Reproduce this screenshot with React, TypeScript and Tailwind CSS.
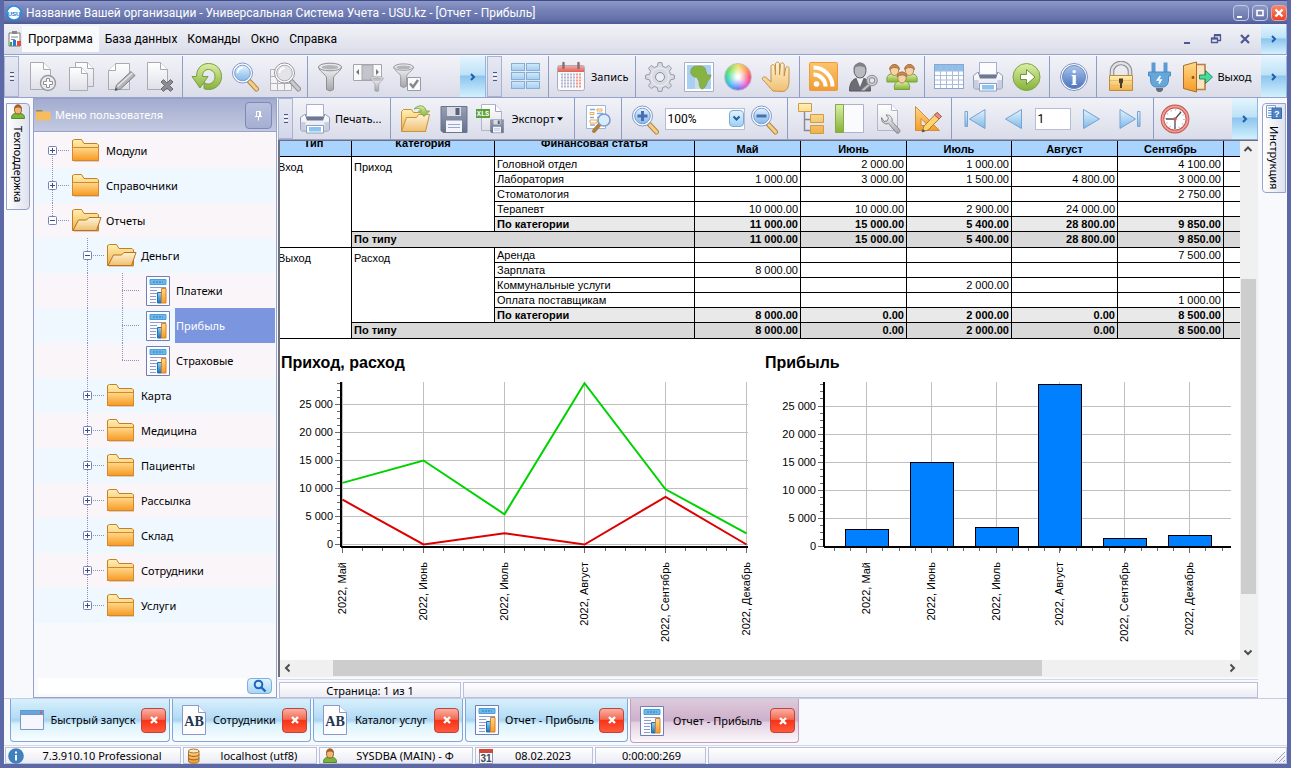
import type { ReactNode } from "react";

/* ---------- shared gradients ---------- */

const gradients: [string, string, string][] = [
  ["gDoc", "#ffffff", "#dfe0e8"],
  ["gSteel", "#f4f4f6", "#a3a4a8"],
  ["gGold", "#fff0b4", "#eeb04a"],
  ["gOrange", "#ffd98c", "#f79a22"],
  ["gSand", "#fff4d6", "#efbf70"],
  ["gGreen", "#dcefa6", "#84b236"],
  ["gBlue", "#e3f3fe", "#7fb8e8"],
  ["gTile", "#d3e9fa", "#a3cdf0"],
  ["gDeep", "#a9c4ee", "#4a74bd"],
  ["gSlate", "#98a0b5", "#66708a"],
  ["gRss", "#fbc56c", "#f29a33"],
  ["gRed", "#f4a79d", "#dc5f54"],
  ["gCyan", "#8fd4f8", "#1773bd"],
];

function Gradients() {
  return (
    <svg className="absolute size-0" aria-hidden="true">
      <defs>
        {gradients.map(([id, from, to]) => (
          <linearGradient key={id} id={id} x1="0" y1="0" x2="0" y2="1">
            <stop offset="0" stopColor={from} />
            <stop offset="1" stopColor={to} />
          </linearGradient>
        ))}
      </defs>
    </svg>
  );
}

function Ico({ children }: { children: ReactNode }) {
  return (
    <svg viewBox="0 0 32 32" className="size-8 shrink-0" fill="none" aria-hidden="true">
      {children}
    </svg>
  );
}

/* ---------- toolbar icons ---------- */

const Sheet = ({ stroke = "#a9aab2" }: { stroke?: string }) => (
  <g stroke={stroke}>
    <path d="M3.5 1.5h13l7 7v20h-20z" fill="url(#gDoc)" />
    <path d="M16.5 1.5v7h7" fill="#fff" />
  </g>
);

const DocAdd = () => (
  <Ico>
    <Sheet />
    <circle cx="21" cy="22" r="7.5" fill="#ececf0" stroke="#98999f" strokeWidth="1.4" />
    <path d="M19.5 17.5h3v3h3v3h-3v3h-3v-3h-3v-3h3z" fill="#fff" stroke="#8f9096" />
  </Ico>
);
const DocCopy = () => (
  <Ico>
    <g stroke="#a9aab2">
      <path d="M9.500 1.500h12l6 6v18h-18z" fill="url(#gDoc)" />
      <path d="M21.500 1.500v6h6" fill="#fff" />
      <path d="M3.500 6.500h12l6 6v17h-18z" fill="url(#gDoc)" />
      <path d="M15.500 6.500v6h6" fill="#fff" />
    </g>
  </Ico>
);
const DocEdit = () => (
  <Ico>
    <g stroke="#a9aab2">
      <path d="M24.500 2.500h-14l-7 7v19h21z" fill="url(#gDoc)" />
      <path d="M10.500 2.500v7h-7" fill="#fff" />
    </g>
    <path d="M10 29.500l1.500-5.500L26 10.500l4 4L15.500 28z" fill="#b4b5ba" stroke="#7f8086" strokeLinejoin="round" />
    <path d="M12.500 25.500L27.500 12" stroke="#e8e8ec" strokeWidth="1.300" />
    <path d="M10 29.500l1-3 2 2z" fill="#555" />
  </Ico>
);
const DocDelete = () => (
  <Ico>
    <Sheet />
    <path d="M17 21l2.500-2.500 3.500 3.500 3.500-3.500L29 21l-3.500 3.500L29 28l-2.500 2.500L23 27l-3.500 3.500L17 28l3.500-3.500z" fill="#8c8d92" stroke="#6b6c72" />
  </Ico>
);
const Refresh = () => (
  <Ico>
    <path
      d="M5.500 15.500C5.500 7.500 10.500 2.500 17.500 2.500c7.500 0 13 5.500 13 13S25 28.500 17.500 28.500c-1.500 0-3-.2-4.500-.8v-6.200c1.200 1 2.700 1.500 4.200 1.500 3.800 0 6.800-3.200 6.800-7.500S21 8.500 17.300 8.500c-3.300 0-5.800 2.500-5.800 7h5.500L9 27 1 15.500z"
      fill="url(#gGreen)"
      stroke="#7b9c41"
      strokeLinejoin="round"
    />
  </Ico>
);
const Magnifier = ({ sign, gray }: { sign?: "+" | "-"; gray?: boolean }) => (
  <g>
    <path d="M19.500 20.500l7 7.500" stroke={gray ? "#8e8f94" : "#a98449"} strokeWidth="5" strokeLinecap="round" />
    <path d="M20 21l6.500 7" stroke={gray ? "#c9cacd" : "#f8cd80"} strokeWidth="3.200" strokeLinecap="round" />
    <circle cx="12.500" cy="12" r="10" fill="#fff" stroke={gray ? "#97989d" : "#7f9ad0"} />
    <circle cx="12.500" cy="12" r="7.800" fill={gray ? "#e4e4e8" : "url(#gBlue)"} stroke={gray ? "#a9aaaf" : "#7f9ad0"} />
    {sign && <path d="M7.500 12h10" stroke="#4a6db3" strokeWidth="3" />}
    {sign === "+" && <path d="M12.500 7v10" stroke="#4a6db3" strokeWidth="3" />}
    {!sign && <path d="M7.500 12a5 5 0 0 1 5-5" stroke="#fff" strokeWidth="1.800" />}
  </g>
);
const Search = () => (
  <Ico>
    <Magnifier />
  </Ico>
);
const GridSearch = () => (
  <Ico>
    <path d="M1.500 8.500h21v21h-21zM1.500 15.500h21M1.500 22.500h21M8.500 8.500v21M15.500 8.500v21" fill="#f3f3f6" stroke="#b2b3b9" />
    <g transform="translate(3 0)">
      <Magnifier gray />
    </g>
  </Ico>
);
const FunnelShape = () => (
  <g stroke="#8f9096">
    <path d="M4.500 6c0 4 8 7.500 8 11v11.500l3.500 1.500 3.500-1.500V17c0-3.500 8-7 8-11z" fill="url(#gSteel)" />
    <ellipse cx="16" cy="6" rx="11.500" ry="3.800" fill="#e9e9ec" />
    <ellipse cx="16" cy="6.300" rx="8.500" ry="2.200" fill="#b4b5ba" stroke="none" />
  </g>
);
const Funnel = () => (
  <Ico>
    <FunnelShape />
  </Ico>
);
const FunnelPanel = () => (
  <Ico>
    <path d="M.5 3.500h28v16H.5z" fill="#fafafa" stroke="#a5a6ac" />
    <path d="M9 4h11v15H9z" fill="#c4c5ca" stroke="#a5a6ac" />
    <path d="M6 8v6l-3-3zM23 8v6l3-3z" fill="#77787e" />
    <g transform="translate(15 14) scale(.55)">
      <FunnelShape />
    </g>
  </Ico>
);
const FunnelCheck = () => (
  <Ico>
    <g transform="translate(-2 1) scale(.85)">
      <FunnelShape />
    </g>
    <path d="M15.500 16.500h13v13h-13z" fill="#fbfbfd" stroke="#9a9ba2" />
    <path d="M18 22.500l3 3.500 5-7" stroke="#85868c" strokeWidth="2.400" />
  </Ico>
);
const Tiles = () => (
  <Ico>
    {[2.5, 11.5, 20.5].map((y) =>
      [1.5, 16.5].map((x) => (
        <rect key={`${x}-${y}`} x={x} y={y} width="13" height="7" fill="url(#gTile)" stroke="#86afd8" />
      )),
    )}
  </Ico>
);
const Calendar = () => (
  <Ico>
    <rect x="2.500" y="4.500" width="27" height="25" rx="2" fill="#fafafd" stroke="#a9abc0" />
    <path d="M3 5h26v6H3z" fill="url(#gRed)" />
    <path d="M8.500 2v5M23.500 2v5" stroke="#8d6b73" strokeWidth="2.400" strokeLinecap="round" />
    {[13, 16, 19, 22, 25].map((y) => (
      <g key={y}>
        <path d={`M6 ${y + 0.5}h14`} stroke="#b2b6cf" strokeWidth="2" strokeDasharray="2 1" />
        <path d={`M21 ${y + 0.5}h5`} stroke="#f19a8f" strokeWidth="2" strokeDasharray="2 1" />
      </g>
    ))}
  </Ico>
);
const gearPath = (() => {
  const points: string[] = [];
  for (let i = 0; i < 8; i++) {
    const a = (i * Math.PI) / 4;
    for (const [d, r] of [[-0.25, 11], [-0.13, 14.5], [0.13, 14.5], [0.25, 11]]) {
      points.push(`${(16 + Math.sin(a + d) * r).toFixed(1)} ${(16 - Math.cos(a + d) * r).toFixed(1)}`);
    }
  }
  return `M${points.join("L")}z`;
})();
const Gear = () => (
  <Ico>
    <path d={gearPath} fill="#d9dbe4" stroke="#979aa8" strokeLinejoin="round" />
    <circle cx="16" cy="16" r="4.500" fill="#eceef5" stroke="#8b8d99" />
    <circle cx="16" cy="16" r="9" stroke="#eff0f5" />
  </Ico>
);
const MapIcon = () => (
  <Ico>
    <path d="M1.500 1.500h29v29h-29z" fill="#fff" stroke="#a9aecb" />
    <path d="M4 4h24v24H4z" fill="#a9d0f2" />
    <path d="M12 4h8v24h-8z" fill="#cbdde6" />
    <path d="M8 9c1-3 3-4 6-4h5l3 2 2 7h4c0 4-4 5-4 8-1 3-3 6-5 6s-3-5-3-8c-2-2-1-4-4-4-3-1-5-3-4-7z" fill="#86b443" stroke="#8aa458" />
  </Ico>
);
const ColorWheel = () => (
  <span className="size-7 rounded-full border border-[#c5b9cc] bg-[radial-gradient(circle,white_8%,transparent_62%),conic-gradient(from_0deg,#f0e060,#ff9c5c,#fb5470,#e560d8,#6d7cf2,#42b6f0,#35d8a0,#7be060,#f0e060)]" />
);
const Hand = () => (
  <Ico>
    <path
      d="M12 30C9 27 5 22 1.500 18.500c-1-2 1.500-3.500 3.500-2l5 4.500V5.500c0-2.500 3.500-2.500 3.800 0L14.500 14V3c.2-2.500 3.800-2.500 4 0v11l1-10.500c.3-2.300 3.700-2 3.700.3V15l1.500-8c.5-2 3.500-1.700 3.300.5V21c0 5-2.500 9-5.500 9.500z"
      fill="url(#gSand)"
      stroke="#c39049"
    />
  </Ico>
);
const Rss = () => (
  <Ico>
    <rect x="1.500" y="1.500" width="28" height="28" rx="1" fill="url(#gRss)" stroke="#ec9a3a" />
    <circle cx="8.500" cy="23" r="2.800" fill="#fff" />
    <path d="M5.500 13.500a12 12 0 0 1 12 12M5.500 6.500a19 19 0 0 1 19 19" stroke="#fff" strokeWidth="4" />
  </Ico>
);
const PersonKey = () => (
  <Ico>
    <path d="M2.500 30c0-8 3-12 8-13h5c5 1 8 5 8 13z" fill="#6c6d74" stroke="#55565c" />
    <path d="M9.500 17l3.500 9 3.500-9z" fill="#f1f1f4" />
    <ellipse cx="13" cy="9.500" rx="6" ry="7.500" fill="#b9babf" stroke="#5d5e64" />
    <path d="M6.500 8c0-8 13-8.500 13 0-3-3-9-4-13 0z" fill="#808188" />
    <path d="M22 22l-8 7 3 1 8-7z" fill="#c0c1c6" stroke="#808187" />
    <circle cx="25" cy="19.500" r="4" stroke="#8e8f95" strokeWidth="3.600" />
    <circle cx="25" cy="19.500" r="4" stroke="#cfd0d4" strokeWidth="1.600" />
  </Ico>
);
const Head = ({ x, y }: { x: number; y: number }) => (
  <g transform={`translate(${x} ${y})`}>
    <path d="M-7.500 15.500C-8.500 8.500-5 7.500-2.500 7.500h5C5 7.500 8.500 8.500 7.500 15.500z" fill="url(#gGreen)" stroke="#7a9f42" />
    <ellipse cy="3.500" rx="4.200" ry="5.500" fill="#f5d3a8" stroke="#b9854e" />
    <path d="M-4.800 3c-.5-6.500 10-6.500 9.600 0C3 .5-2 0-4.800 3z" fill="#c98a55" stroke="#a9713d" />
  </g>
);
const Users = () => (
  <Ico>
    <Head x={8.500} y={5.500} />
    <Head x={23.500} y={5.500} />
    <Head x={16} y={13} />
  </Ico>
);
const TableIcon = () => (
  <Ico>
    <rect x="1.500" y="3.500" width="29" height="24" fill="#fff" stroke="#8ba6cf" />
    <path d="M2 4h28v6H2z" fill="#8cc0ec" />
    <path d="M2 10h28M2 14.500h28M2 19h28M2 23.500h28M7.500 4v23M13.500 4v23M19.500 4v23M25.500 4v23" stroke="#a9bcdc" />
  </Ico>
);
const Printer = () => (
  <Ico>
    <path d="M5.500 11.500h21l4 3v11.500c0 1-1 2-2 2h-25c-1 0-2-1-2-2v-11.500z" fill="url(#gDoc)" stroke="#8d97b7" />
    <path d="M6 12l2 5.500h16l2-5.500z" fill="#6f7891" />
    <path d="M7.500 1.500h17v12h-17z" fill="#fcfcff" stroke="#a6add0" />
    <path d="M1.500 19h5v9h-5zM25.500 19h5v9h-5z" fill="#b9c2d8" opacity=".7" />
    <path d="M7.500 22.500h17v7.500h-17z" fill="#fff" stroke="#8d9cc4" />
    <path d="M10 24h12v4.500H10z" fill="#8cc4f0" />
  </Ico>
);
const GoArrow = () => (
  <Ico>
    <circle cx="15.500" cy="16" r="13.500" fill="url(#gGreen)" stroke="#7ea24a" />
    <path d="M9.500 13.500h6v-5l8.500 7.500-8.500 7.500v-5h-6z" fill="#fff" stroke="#6d9439" strokeLinejoin="round" />
  </Ico>
);
const Info = () => (
  <Ico>
    <circle cx="16" cy="16" r="13.500" fill="#fff" stroke="#7e90bd" />
    <circle cx="16" cy="16" r="11.500" fill="url(#gDeep)" stroke="#6f8bc4" />
    <text x="16" y="23.500" textAnchor="middle" fontFamily="Liberation Serif, serif" fontWeight="700" fontSize="22" fill="#fff">
      i
    </text>
  </Ico>
);
const Lock = () => (
  <Ico>
    <path d="M7 15v-4.500a9 8.500 0 0 1 18 0V15" stroke="#8d8e93" strokeWidth="4.600" />
    <path d="M7 15v-4.500a9 8.500 0 0 1 18 0V15" stroke="#e2e2e5" strokeWidth="2.400" />
    <path d="M4.500 14.500h23v15h-23z" fill="url(#gGold)" stroke="#c08c38" />
    <path d="M5 19.500h22M5 24.500h22" stroke="#e9bd6c" />
    <path d="M14 17.500h4v4l-1 1v4.500h-2v-4.500l-1-1z" fill="#4c3d2a" />
  </Ico>
);
const Plug = () => (
  <Ico>
    <path d="M9.500 1.500v10M21.500 1.500v10" stroke="#5c9bd1" strokeWidth="4" />
    <path d="M4.500 11h22v4h-2v4c0 4-2.500 7-5.500 7h-7c-3 0-5.500-3-5.500-7v-4h-2z" fill="#65a6db" stroke="#4b8ac2" />
    <path d="M16.500 15l-3 4h3.500l-2 3.500" stroke="#fff" strokeWidth="1.600" />
    <path d="M12 27h7v2l-2 2h-3l-2-2z" fill="#6a6f7b" />
  </Ico>
);
const Door = () => (
  <Ico>
    <path d="M12 3.500h12v25H12z" fill="#fbe3c2" stroke="#b98043" strokeWidth="1.600" />
    <path d="M2.500 4.500l13-3.500v30l-13-3.500z" fill="url(#gOrange)" stroke="#a96c2d" strokeLinejoin="round" />
    <circle cx="12" cy="16.500" r="1.400" fill="#8a5520" />
    <path d="M18.500 14h6v-4.500l7 6.500-7 6.500V18h-6z" fill="#46dd9b" stroke="#2c8f62" strokeLinejoin="round" />
  </Ico>
);
const OpenFolder = () => (
  <Ico>
    <path d="M2.500 28.500V8.500l2-2h8l2 3h12v19z" fill="url(#gGold)" stroke="#c9923f" />
    <path d="M2.500 28.500l5-14h10l2-3h11l-4 17z" fill="url(#gSand)" stroke="#c9923f" strokeLinejoin="round" />
    <path d="M15 6c5-5 11-4 12 2h3.500l-5.500 5.500L19.500 8h3c-1-3-4-3-7.500-2z" fill="url(#gGreen)" stroke="#83a850" />
  </Ico>
);
const FloppyShape = () => (
  <g>
    <path d="M3 3.500h26v26H5l-2-2z" fill="url(#gSlate)" stroke="#6b7590" />
    <path d="M9 4h14v9H9z" fill="#d9dce6" />
    <path d="M17.500 5h4v7h-4z" fill="#5a627a" />
    <path d="M8 17.500h16V29H8z" fill="#f4f5fa" />
    <path d="M10 21.500h12M10 24.500h12" stroke="#9aa6cf" />
  </g>
);
const Floppy = () => (
  <Ico>
    <FloppyShape />
  </Ico>
);
const XlsExport = () => (
  <Ico>
    <path d="M6.500 1.500h14l6 7v19h-20z" fill="url(#gDoc)" stroke="#b0b4cc" />
    <path d="M20.500 1.500v7h6" fill="#fff" stroke="#9ea4c4" />
    <path d="M1 6h14v9H1z" fill="#5da03b" />
    <text x="8" y="13" textAnchor="middle" fontFamily="Liberation Mono, monospace" fontWeight="700" fontSize="7" fill="#fff">
      XLS
    </text>
    <g transform="translate(14 15) scale(.5)">
      <FloppyShape />
    </g>
  </Ico>
);
const Preview = () => (
  <Ico>
    <path d="M4.500 2.500h19v23h-19z" fill="#fff" stroke="#9fb4d8" />
    <path d="M8 6.500h5M15 10.500h6M8 14.500h4M15 14.500h6M8 18.500h5M8 22h5" stroke="#7eaee0" strokeWidth="1.400" />
    <path d="M15 6h5v2h-5zM8 9.500h4v2H8zM8 17h7v3H8z" fill="#fff" stroke="#f0a84d" />
    <path d="M18 21l-6 7" stroke="#b07c3a" strokeWidth="4" strokeLinecap="round" />
    <circle cx="22" cy="17" r="6" fill="#d9ecfb" stroke="#7f9bcb" strokeWidth="1.600" />
  </Ico>
);
const ZoomIn = () => (
  <Ico>
    <g transform="translate(1 1)">
      <Magnifier sign="+" />
    </g>
  </Ico>
);
const ZoomOut = () => (
  <Ico>
    <g transform="translate(1 1)">
      <Magnifier sign="-" />
    </g>
  </Ico>
);
const Outline = () => (
  <Ico>
    <path d="M9.500 8v19.500H15M9.500 16.500H15" stroke="#868993" strokeWidth="1.400" />
    <path d="M3.500 .5h13v8h-13zM15.500 11.500h13v8h-13zM15.500 22.500h13v8h-13z" fill="url(#gGold)" stroke="#d19a44" />
  </Ico>
);
const SidePane = () => (
  <Ico>
    <path d="M1.500 1.500h28v28h-28z" fill="#fbfbfe" stroke="#a9b2cf" />
    <path d="M1.500 1.500h8v28h-8z" fill="url(#gGreen)" stroke="#86a94a" />
  </Ico>
);
const PageSetup = () => (
  <Ico>
    <path d="M4.500 1.500h14l6 6v20h-20z" fill="url(#gDoc)" stroke="#b0b4cc" />
    <path d="M18.500 1.500v6h6" fill="#fff" stroke="#b0b4cc" />
    <path
      d="M8.500 14.500c-.5 5 3.500 7.500 7 6l7.500 9c2 2 5-.5 3.500-3l-7.500-8c1-4-2.500-7-6-6.500l2.500 3-1.500 3-3 .5z"
      fill="url(#gSteel)"
      stroke="#85868d"
      strokeLinejoin="round"
    />
  </Ico>
);
const Drafting = () => (
  <Ico>
    <path d="M3.500 3.500v24h24zM9 15.500l7 7H9z" fill="url(#gOrange)" fillRule="evenodd" stroke="#cf8d3f" strokeLinejoin="round" />
    <path d="M10 29l2-6L25 9.500l4.500 4L16 27z" fill="#ffd46e" stroke="#a97b36" strokeLinejoin="round" />
    <path d="M25 9.500l4.500 4-2.500 2.500-4.500-4z" fill="#e88d8a" stroke="#a65b59" />
    <path d="M10 29l1-3 2 2z" fill="#444" />
  </Ico>
);
const NavIcon = ({ back, end }: { back?: boolean; end?: boolean }) => (
  <Ico>
    <g fill="url(#gBlue)" stroke="#74a3d4" strokeLinejoin="round" transform={back ? "translate(32 0) scale(-1 1)" : undefined}>
      <path d={end ? "M6 6.500v19l15.500-9.500z" : "M8.500 6.500v19l16-9.500z"} />
      {end && <path d="M23.500 8.500h2.500v15h-2.500z" />}
    </g>
  </Ico>
);
const Clock = () => (
  <Ico>
    <circle cx="16" cy="16" r="12.500" fill="#fff" stroke="#c3524d" strokeWidth="3.800" />
    <circle cx="16" cy="16" r="12.500" stroke="#ee9b94" strokeWidth="2" />
    <circle cx="16" cy="16" r="9" stroke="#aeb4c8" strokeWidth="1.500" strokeDasharray="1 3.700" />
    <path d="M16 26V16h-9M16 16l6-7" stroke="#4c4e5a" strokeWidth="1.300" />
    <circle cx="16" cy="16" r="1.800" fill="#d45a52" />
  </Ico>
);

/* ---------- small icons ---------- */

const ReportSheet = () => (
  <svg viewBox="0 0 26 32" className="h-8 w-[26px] shrink-0" fill="none" aria-hidden="true">
    <path d="M1.500 1.500h23v29h-23z" fill="#fcfcff" stroke="#6f7fb6" />
    <path d="M5 4.500h16v5H5z" fill="#6cb8ea" stroke="#4c9ed8" />
    <path d="M8 7h10" stroke="#2f7db8" strokeDasharray="2 1" />
    <path d="M5 12.500h16M5 15.500h7M5 18.500h7M5 21.500h6M5 24.500h6M5 27.500h6" stroke="#8e9bcf" />
    <path d="M12.500 17.500h4v10.500h-4z" fill="url(#gCyan)" stroke="#1f6fb4" />
    <path d="M16.500 13.500h4.500v14.500h-4.500z" fill="url(#gOrange)" stroke="#d8812a" />
  </svg>
);
const Folder = ({ open }: { open?: boolean }) => (
  <svg viewBox="0 0 32 26" className="h-[26px] w-8 shrink-0" fill="none" aria-hidden="true">
    <path d="M1.500 22.500v-20l2-1h7l2.500 4h13l1.500 1.500v15.500z" fill="url(#gGold)" stroke="#c77f1e" strokeLinejoin="round" />
    {open ? (
      <path d="M2 22.500l5.500-10.500h8l2.500-2.500h12l-4.500 13z" fill="url(#gSand)" stroke="#b9721a" strokeLinejoin="round" />
    ) : (
      <path d="M1.500 22.500V10.500l1-1h24.500l.5 1v12z" fill="url(#gOrange)" stroke="#d7872a" strokeLinejoin="round" />
    )}
    <path d="M3 23.500h25" stroke="#d9cfc6" />
  </svg>
);
const PersonSmall = () => (
  <svg viewBox="0 0 16 16" className="size-4 shrink-0" fill="none" aria-hidden="true">
    <path d="M1.500 14.500c0-4 2-5 4.500-5h4c2.500 0 4.500 1 4.500 5z" fill="#7db53c" stroke="#4f8a22" />
    <ellipse cx="8" cy="5.500" rx="3.500" ry="4.500" fill="#f0b878" stroke="#9a5a26" />
    <path d="M4.500 5c-.5-6 7.500-6 7 0-2-2-5-2-7 0z" fill="#a5602a" />
  </svg>
);
const HelpBook = () => (
  <svg viewBox="0 0 16 16" className="size-4 shrink-0" fill="none" aria-hidden="true">
    <path d="M.5 1.500h9v12h-9z" fill="#fff" stroke="#7f9fce" />
    <path d="M2 4h5M2 6.500h5M2 9h5M2 11.500h5" stroke="#5e8fcb" />
    <path d="M6 4h9.500v10.500H6z" fill="#4b83c3" stroke="#356cae" />
    <text x="10.800" y="12.500" textAnchor="middle" fontFamily="Liberation Sans, sans-serif" fontWeight="700" fontSize="9" fill="#fff">
      ?
    </text>
  </svg>
);
const WindowIcon = () => (
  <svg viewBox="0 0 26 22" className="h-[22px] w-[26px] shrink-0" fill="none" aria-hidden="true">
    <path d="M1.500 1.500h23v19h-23z" fill="#f6f7fc" stroke="#7f93c4" />
    <path d="M1.500 1.500h23v4h-23z" fill="#5fa9e0" stroke="#6f93c9" />
    <path d="M21 2.500h2v2h-2z" fill="#f0503c" />
  </svg>
);
const AbSheet = () => (
  <svg viewBox="0 0 26 32" className="h-8 w-[26px] shrink-0" fill="none" aria-hidden="true">
    <path d="M1.500 1.500h16l7 7v22h-23z" fill="#fdfdff" stroke="#8c98c9" />
    <path d="M17.500 1.500v7h7" fill="#fff" stroke="#8c98c9" />
    <text x="13" y="21.500" textAnchor="middle" fontFamily="Liberation Serif, serif" fontWeight="700" fontSize="14" fill="#22384e">
      AB
    </text>
  </svg>
);
const InfoSmall = () => (
  <svg viewBox="0 0 16 16" className="size-4 shrink-0" aria-hidden="true">
    <circle cx="8" cy="8" r="7.800" fill="#4080bc" />
    <path d="M7 3.500h2v2H7zM7 7h2v5.500H7z" fill="#fff" />
  </svg>
);
const Database = () => (
  <svg viewBox="0 0 16 16" className="size-4 shrink-0" fill="none" aria-hidden="true">
    <path d="M2.500 3v10c0 3 10.500 3 10.500 0V3z" fill="url(#gOrange)" stroke="#a8733a" />
    <ellipse cx="7.750" cy="3" rx="5.250" ry="2" fill="#ffe9bd" stroke="#a8733a" />
    <path d="M2.500 6.500c0 2.500 10.500 2.500 10.500 0M2.500 10c0 2.500 10.500 2.500 10.500 0" stroke="#8f5b28" />
  </svg>
);
const Day31 = () => (
  <svg viewBox="0 0 16 16" className="size-4 shrink-0" fill="none" aria-hidden="true">
    <path d="M1.500 1.500h13v14h-13z" fill="#fbfbfd" stroke="#9097ad" />
    <path d="M1 1h14v4H1z" fill="#d0473c" />
    <text x="8" y="13.500" textAnchor="middle" fontFamily="Liberation Sans, sans-serif" fontWeight="700" fontSize="10" fill="#3c4657">
      31
    </text>
  </svg>
);
const Chevron = () => (
  <svg viewBox="0 0 8 10" className="h-[10px] w-2" fill="none" aria-hidden="true">
    <path d="M2 2l3 3-3 3" stroke="#1c5fae" strokeWidth="2" />
  </svg>
);
const ScrollArrow = ({ d }: { d: string }) => (
  <svg viewBox="0 0 16 16" className="size-4" fill="none" aria-hidden="true">
    <path d={d} stroke="#4d4d4d" strokeWidth="2" />
  </svg>
);

/* ---------- toolbar parts ---------- */

const bar = "flex items-stretch bg-linear-to-b from-[#f2f3f8] to-[#dadce9]";

function Grip() {
  return (
    <span className="flex w-[15px] shrink-0 flex-col items-center justify-center gap-px border border-[#a9b2d3] bg-linear-to-b from-[#e6e8f2] to-[#d3d7e8]">
      <i className="h-px w-1 bg-[#4a5688]" />
      <i className="h-px w-1 bg-white" />
      <i className="h-px w-1 bg-[#4a5688]" />
      <i className="h-px w-1 bg-white" />
      <i className="h-px w-1 bg-[#4a5688]" />
    </span>
  );
}

function More() {
  return (
    <button
      aria-label="Ещё"
      className="flex w-[26px] shrink-0 items-center justify-center border-r border-[#8fb7df] bg-[linear-gradient(#e4f5fe,#bfe2f7_45%,#8fc6ee_50%,#d2f1fd)]"
    >
      <Chevron />
    </button>
  );
}

const Group = ({ children }: { children: ReactNode }) => (
  <div className="flex shrink-0 items-center border-r border-[#8f9cc6] pr-[3px] pl-1">{children}</div>
);

const Tool = ({ name, children }: { name: string; children: ReactNode }) => (
  <button aria-label={name} className="flex w-[39px] shrink-0 items-center justify-center">
    {children}
  </button>
);

/* ---------- tree ---------- */

type Node = { label: string; level: number; kind: "folder" | "open" | "report"; selected?: boolean; last?: boolean; first?: boolean };

const nodes: Node[] = [
  { label: "Модули", level: 0, kind: "folder", first: true },
  { label: "Справочники", level: 0, kind: "folder" },
  { label: "Отчеты", level: 0, kind: "open", last: true },
  { label: "Деньги", level: 1, kind: "open" },
  { label: "Платежи", level: 2, kind: "report" },
  { label: "Прибыль", level: 2, kind: "report", selected: true },
  { label: "Страховые", level: 2, kind: "report", last: true },
  { label: "Карта", level: 1, kind: "folder" },
  { label: "Медицина", level: 1, kind: "folder" },
  { label: "Пациенты", level: 1, kind: "folder" },
  { label: "Рассылка", level: 1, kind: "folder" },
  { label: "Склад", level: 1, kind: "folder" },
  { label: "Сотрудники", level: 1, kind: "folder" },
  { label: "Услуги", level: 1, kind: "folder", last: true },
];

function Branch({ node, depth }: { node: Node; depth: number }) {
  const own = depth === node.level;
  const through = depth === 1 && node.level === 2;
  return (
    <svg viewBox="0 0 35 35" className="size-[35px] shrink-0" fill="none" aria-hidden="true">
      {(own || through) && (
        <g stroke="#8a93ba" strokeDasharray="1 1">
          <path d={`M17.500 ${own && node.first ? 17 : 0}V${own && node.last ? 18 : 35}`} />
          {own && <path d={`M17 17.500H${node.level === 2 ? 35 : 34}`} />}
        </g>
      )}
      {own && node.kind !== "report" && (
        <g>
          <rect x="13.500" y="13.500" width="8" height="8" rx="1" fill="#fff" stroke="#7580b4" />
          <path d={node.kind === "folder" ? "M15 17.500h5M17.500 15v5" : "M15 17.500h5"} stroke="#3d4a8c" />
        </g>
      )}
    </svg>
  );
}

function TreeRow({ node }: { node: Node }) {
  const depths = Array.from({ length: node.level + 1 }, (_, i) => i);
  return (
    <li className="flex h-[35px] items-center odd:bg-[#faf5f8] even:bg-[#eff7ff]">
      {depths.map((d) => (
        <Branch key={d} node={node} depth={d} />
      ))}
      <span className={node.kind === "report" ? "flex w-[35px] justify-center" : "flex w-[35px] pl-px"}>
        {node.kind === "report" ? <ReportSheet /> : <Folder open={node.kind === "open"} />}
      </span>
      <button
        className={
          node.selected
            ? "flex h-full flex-1 items-center bg-[#7b96de] pl-px text-white"
            : "flex h-full flex-1 items-center pl-px text-black"
        }
      >
        {node.label}
      </button>
    </li>
  );
}

/* ---------- report ---------- */

type Line = { name: string; values: string[] };
type Section = { type: string; category: string; lines: Line[]; total: string[] };

const months = ["Май", "Июнь", "Июль", "Август", "Сентябрь", ""];

const sections: Section[] = [
  {
    type: "Вход",
    category: "Приход",
    lines: [
      { name: "Головной отдел", values: ["", "2 000.00", "1 000.00", "", "4 100.00", ""] },
      { name: "Лаборатория", values: ["1 000.00", "3 000.00", "1 500.00", "4 800.00", "3 000.00", ""] },
      { name: "Стоматология", values: ["", "", "", "", "2 750.00", ""] },
      { name: "Терапевт", values: ["10 000.00", "10 000.00", "2 900.00", "24 000.00", "", ""] },
    ],
    total: ["11 000.00", "15 000.00", "5 400.00", "28 800.00", "9 850.00", ""],
  },
  {
    type: "Выход",
    category: "Расход",
    lines: [
      { name: "Аренда", values: ["", "", "", "", "7 500.00", ""] },
      { name: "Зарплата", values: ["8 000.00", "", "", "", "", ""] },
      { name: "Коммунальные услуги", values: ["", "", "2 000.00", "", "", ""] },
      { name: "Оплата поставщикам", values: ["", "", "", "", "1 000.00", ""] },
    ],
    total: ["8 000.00", "0.00", "2 000.00", "0.00", "8 500.00", ""],
  },
];

const cell = "border border-black px-0.5 py-0";
const num = "border border-black px-0.5 py-0 text-right";

function SectionRows({ section }: { section: Section }) {
  return (
    <tbody>
      {section.lines.map((line, i) => (
        <tr key={line.name} className="h-[15px]">
          {i === 0 && (
            <>
              <td rowSpan={6} className={`${cell} pt-[3px] align-top`}>{section.type}</td>
              <td rowSpan={5} className={`${cell} pt-[3px] align-top`}>{section.category}</td>
            </>
          )}
          <td className={cell}>{line.name}</td>
          {line.values.map((v, k) => (
            <td key={k} className={num}>{v}</td>
          ))}
        </tr>
      ))}
      <tr className="h-[15px] bg-[#e9e9e9] font-bold">
        <td className={cell}>По категории</td>
        {section.total.map((v, k) => (
          <td key={k} className={num}>{v}</td>
        ))}
      </tr>
      <tr className="h-4 bg-[#d9d9d9] align-top font-bold">
        <td colSpan={2} className={cell}>По типу</td>
        {section.total.map((v, k) => (
          <td key={k} className={num}>{v}</td>
        ))}
      </tr>
    </tbody>
  );
}

function ReportTable() {
  return (
    <table className="-mt-[15px] -ml-[5px] w-[1000px] table-fixed border-collapse bg-white text-[11px] leading-[14px]">
      <colgroup>
        <col className="w-[76px]" />
        <col className="w-[143px]" />
        <col className="w-[200px]" />
        <col className="w-[106px]" />
        <col className="w-[106px]" />
        <col className="w-[105px]" />
        <col className="w-[106px]" />
        <col className="w-[106px]" />
        <col />
      </colgroup>
      <thead className="bg-[#a9d4ff]">
        <tr className="h-[14px]">
          <th rowSpan={2} className={`${cell} pt-0.5`}>Тип</th>
          <th rowSpan={2} className={`${cell} pt-0.5`}>Категория</th>
          <th rowSpan={2} className={`${cell} pt-0.5`}>Финансовая статья</th>
          <th colSpan={6} className={cell} />
        </tr>
        <tr className="h-4">
          {months.map((m, i) => (
            <th key={i} className={cell}>{m}</th>
          ))}
        </tr>
      </thead>
      {sections.map((s) => (
        <SectionRows key={s.type} section={s} />
      ))}
    </table>
  );
}

/* ---------- charts ---------- */

const periods = ["2022, Май", "2022, Июнь", "2022, Июль", "2022, Август", "2022, Сентябрь", "2022, Декабрь"];
const scale = [0, 5000, 10000, 15000, 20000, 25000];
const format = (v: number) => (v === 0 ? "0" : `${v / 1000} 000`);
const income = [11000, 15000, 5400, 28800, 9850, 2000];
const expense = [8000, 0, 2000, 0, 8500, 0];
const profit = [3000, 15000, 3400, 28800, 1350, 2000];

type AxesProps = { xs: number[]; y0: number; step: number; axis: number; right: number; edge: number };

function Axes({ xs, y0, step, axis, right, edge }: AxesProps) {
  const y = (v: number) => Math.round(y0 - (v / 5000) * step) + 0.5;
  const gap = (xs[5] - xs[0]) / 20;
  const minor = Array.from({ length: Math.floor((right - edge) / gap) + 1 }, (_, i) => edge + i * gap);
  return (
    <g>
      <g stroke="#bfbfbf" shapeRendering="crispEdges">
        {scale.map((v) => (
          <path key={v} d={`M${axis} ${y(v)}H${right}`} />
        ))}
        {xs.map((x) => (
          <path key={x} d={`M${x + 0.5} 1V166`} />
        ))}
      </g>
      <g stroke="#6b6b6b" shapeRendering="crispEdges">
        {scale.map((v) => (
          <path key={v} d={`M${axis - 6} ${y(v)}h5`} />
        ))}
        {Array.from({ length: 24 }, (_, i) => Math.round(y0 - (i * step) / 4) + 0.5)
          .filter((ty) => ty > 1)
          .map((ty) => (
            <path key={ty} d={`M${axis - 4} ${ty}h3`} />
          ))}
        {minor.map((x) => (
          <path key={x} d={`M${Math.round(x) + 0.5} 167v3`} />
        ))}
        {xs.map((x) => (
          <path key={x} d={`M${x + 0.5} 167v5`} />
        ))}
      </g>
      <path d={`M${axis} 1V166M${axis} 166H${right}`} stroke="#000" strokeWidth="2" shapeRendering="crispEdges" />
      <g fill="#000" fontSize="11">
        {scale.map((v) => (
          <text key={v} x={axis - 8} y={y(v) + 3.5} textAnchor="end">
            {format(v)}
          </text>
        ))}
        {xs.map((x, i) => (
          <text key={x} transform={`translate(${x + 4} 181) rotate(-90)`} textAnchor="end">
            {periods[i]}
          </text>
        ))}
      </g>
    </g>
  );
}

function LineChart() {
  const xs = [62, 143, 224, 304, 385, 466];
  const points = (data: number[]) => data.map((v, i) => `${xs[i] + 0.5},${163.5 - (v / 5000) * 28}`).join(" ");
  return (
    <svg viewBox="0 0 480 263" className="h-[263px] w-[480px] shrink-0" role="img" aria-label="Приход, расход">
      <Axes xs={xs} y0={163} step={28} axis={61} right={468} edge={62} />
      <polyline points={points(income)} fill="none" stroke="#00d200" strokeWidth="2" />
      <polyline points={points(expense)} fill="none" stroke="#dc0000" strokeWidth="2" />
    </svg>
  );
}

function BarChart() {
  const xs = [106, 171, 236, 299, 364, 429];
  return (
    <svg viewBox="0 0 480 263" className="h-[263px] w-[480px] shrink-0" role="img" aria-label="Прибыль">
      <Axes xs={xs} y0={165} step={28.1} axis={64} right={471} edge={74} />
      {profit.map((v, i) => {
        const top = Math.round(165 - (v / 5000) * 28.1) + 0.5;
        return <rect key={i} x={xs[i] - 20.5} y={top} width="43" height={165.5 - top} fill="#0080ff" stroke="#000" />;
      })}
    </svg>
  );
}

/* ---------- bottom tabs ---------- */

const tabs = [
  { label: "Быстрый запуск", icon: <WindowIcon />, box: "w-[160px]" },
  { label: "Сотрудники", icon: <AbSheet />, box: "w-[139px]" },
  { label: "Каталог услуг", icon: <AbSheet />, box: "w-[150px]" },
  { label: "Отчет - Прибыль", icon: <ReportSheet />, box: "w-[163px]" },
  { label: "Отчет - Прибыль", icon: <ReportSheet />, box: "w-[169px]", active: true },
];

function WindowTab({ tab }: { tab: (typeof tabs)[number] }) {
  const skin = tab.active
    ? "h-11 border-[#bf9dbd] bg-[linear-gradient(#decadb,#cdb0cb_50%,#e3d0e1_55%,#fbf8fb)]"
    : "h-[43px] border-[#7fa6d8] bg-[linear-gradient(#d8f0fc,#b4dcf5_45%,#a9d2f1_50%,#d9f3fd_60%,#fafdff)]";
  return (
    <div className={`flex shrink-0 items-center rounded-b border border-t-0 pr-[3px] pl-2 ${tab.box} ${skin}`}>
      {tab.icon}
      <button className="flex-1 text-center whitespace-nowrap">{tab.label}</button>
      <button
        aria-label={`Закрыть: ${tab.label}`}
        className="flex size-[25px] shrink-0 items-center justify-center rounded-sm border border-[#c2423c] bg-[linear-gradient(#f9b0a6,#f4684f_45%,#f83318_50%,#ff5b3b)]"
      >
        <svg viewBox="0 0 8 8" className="size-2" aria-hidden="true">
          <path d="M1 1l6 6M7 1L1 7" stroke="#fff" strokeWidth="2.400" />
        </svg>
      </button>
    </div>
  );
}

const status = [
  { text: "7.3.910.10 Professional", icon: <InfoSmall />, box: "w-[176px]" },
  { text: "localhost (utf8)", icon: <Database />, box: "w-[134px]" },
  { text: "SYSDBA (MAIN) - Ф", icon: <PersonSmall />, box: "w-[154px]" },
  { text: "08.02.2023", icon: <Day31 />, box: "w-[118px]" },
  { text: "0:00:00:269", icon: null, box: "w-[111px]" },
];

const frameBtn = "flex items-center justify-center rounded-sm border border-[#c3c9e2] bg-linear-to-b from-[#8d98c4] to-[#6673ab]";

export default function App() {
  return (
    <div className="flex min-h-screen flex-col overflow-hidden border-x-4 border-b-4 border-[#5c69a6] bg-[#f8f9fc] font-['Noto_Sans','Liberation_Sans',sans-serif] text-[11px] leading-4 text-black">
      <Gradients />

      <header className="-mx-1 flex h-6 items-center border-t border-[#3f4c88] bg-[linear-gradient(#8d98c8,#7a86ba_30%,#6471aa_80%,#4c5995)] pr-1 pl-1.5">
        <svg viewBox="0 0 16 16" className="size-4" aria-hidden="true">
          <circle cx="8" cy="8" r="7" fill="#fff" stroke="#1a90e8" strokeWidth="1.600" />
          <text x="8" y="10.500" textAnchor="middle" fontFamily="Liberation Sans, sans-serif" fontWeight="700" fontSize="6" fill="#1272cc">
            USU
          </text>
        </svg>
        <h1 className="flex-1 truncate pl-1 font-['Roboto','Noto_Sans',sans-serif] text-[12px] text-white">
          Название Вашей организации - Универсальная Система Учета - USU.kz - [Отчет - Прибыль]
        </h1>
        <div className="flex gap-[3px]">
          <button aria-label="Свернуть" className={`${frameBtn} size-4`}>
            <svg viewBox="0 0 14 14" className="size-3.5"><path d="M3 10h5v2H3z" fill="#fff" /></svg>
          </button>
          <button aria-label="Развернуть" className={`${frameBtn} size-4`}>
            <svg viewBox="0 0 14 14" className="size-3.5"><path d="M4 4.500h6v5H4z" fill="none" stroke="#fff" strokeWidth="1.600" /></svg>
          </button>
          <button aria-label="Закрыть" className="flex size-4 items-center justify-center rounded-sm border border-[#f0a090] bg-linear-to-b from-[#f58468] to-[#ee3f22]">
            <svg viewBox="0 0 14 14" className="size-3.5"><path d="M3.500 3.500l7 7M10.500 3.500l-7 7" stroke="#fff" strokeWidth="2.400" /></svg>
          </button>
        </div>
      </header>

      <nav className={`${bar} h-[31px] border-b border-[#97a2ca] font-['Roboto','Noto_Sans',sans-serif] text-[12px]`}>
        <span className="flex w-[18px] items-center pl-1">
          <svg viewBox="0 0 14 18" className="h-[18px] w-3.5" fill="none" aria-hidden="true">
            <path d="M1 3h11v13H1z" fill="#fff" stroke="#777" />
            <path d="M4 1h5v3H4z" fill="#888" />
            <path d="M3 7h7M3 9.500h4" stroke="#888" />
            <path d="M2 16v-4h2v4z" fill="#35a34a" />
            <path d="M5 16v-6h3v6z" fill="#2b78d4" />
            <path d="M9 16v-5h4v5z" fill="#e05038" />
          </svg>
        </span>
        <button className="my-0.5 mr-px bg-[#f9fafc] px-1.5">Программа</button>
        <button className="px-[5px]">База данных</button>
        <button className="px-[5px]">Команды</button>
        <button className="px-[5px]">Окно</button>
        <button className="px-[5px]">Справка</button>
        <div className="ml-auto flex items-center gap-[13px] pr-2">
          <button aria-label="Свернуть окно" className="flex size-4 items-center justify-center">
            <svg viewBox="0 0 12 12" className="size-3"><path d="M3 9h6v2H3z" fill="#4c588f" /></svg>
          </button>
          <button aria-label="Восстановить окно" className="flex size-4 items-center justify-center">
            <svg viewBox="0 0 12 12" className="size-3" fill="none">
              <path d="M4.500 5V2.500h6v5H8M1.500 5.500h6v4h-6z" stroke="#4c588f" strokeWidth="1.300" />
              <path d="M4 2h7M1 5.500h7" stroke="#4c588f" strokeWidth="2" />
            </svg>
          </button>
          <button aria-label="Закрыть окно" className="flex size-4 items-center justify-center">
            <svg viewBox="0 0 12 12" className="size-3"><path d="M2 2l8 8M10 2l-8 8" stroke="#4c588f" strokeWidth="2.200" /></svg>
          </button>
        </div>
        <More />
      </nav>

      <div className="flex h-[43px] border-b border-[#97a2ca] pt-px">
        <div className={`${bar} w-[482px] shrink-0`}>
          <Grip />
          <Group>
            <Tool name="Добавить"><DocAdd /></Tool>
            <Tool name="Копировать"><DocCopy /></Tool>
            <Tool name="Изменить"><DocEdit /></Tool>
            <Tool name="Удалить"><DocDelete /></Tool>
          </Group>
          <Group>
            <Tool name="Обновить"><Refresh /></Tool>
            <Tool name="Поиск"><Search /></Tool>
            <Tool name="Поиск по таблице"><GridSearch /></Tool>
          </Group>
          <div className="flex flex-1 items-center pl-0.5">
            <Tool name="Фильтр"><Funnel /></Tool>
            <Tool name="Фильтр по столбцам"><FunnelPanel /></Tool>
            <Tool name="Включить фильтр"><FunnelCheck /></Tool>
          </div>
          <More />
        </div>
        <div className={`${bar} min-w-0 flex-1 pl-px`}>
          <Grip />
          <Group>
            <Tool name="Плитка"><Tiles /></Tool>
          </Group>
          <Group>
            <button className="flex items-center gap-1 pr-1 pl-0.5"><Calendar />Запись</button>
          </Group>
          <Group>
            <Tool name="Настройки"><Gear /></Tool>
            <Tool name="Карта"><MapIcon /></Tool>
            <Tool name="Цвета"><ColorWheel /></Tool>
            <Tool name="Доступ"><Hand /></Tool>
          </Group>
          <Group>
            <Tool name="Новости"><Rss /></Tool>
            <Tool name="Права пользователя"><PersonKey /></Tool>
            <Tool name="Пользователи"><Users /></Tool>
          </Group>
          <Group>
            <Tool name="Таблица"><TableIcon /></Tool>
            <Tool name="Печать"><Printer /></Tool>
            <Tool name="Перейти"><GoArrow /></Tool>
          </Group>
          <Group>
            <Tool name="О программе"><Info /></Tool>
          </Group>
          <div className="flex flex-1 items-center pl-1">
            <Tool name="Заблокировать"><Lock /></Tool>
            <Tool name="Подключение"><Plug /></Tool>
            <button className="flex items-center gap-1 pl-0.5"><Door />Выход</button>
          </div>
          <More />
        </div>
      </div>

      <main className="flex flex-1">
        <aside className="w-[29px] shrink-0 pt-[5px] pl-0.5">
          <button className="flex h-[107px] w-6 flex-col items-center gap-1.5 rounded-r border border-[#97a2ca] bg-linear-to-r from-white to-[#dfe1ee]">
            <PersonSmall />
            <span className="[writing-mode:vertical-rl]">Техподдержка</span>
          </button>
        </aside>

        <section className="flex w-[244px] shrink-0 flex-col border border-[#97a2ca]">
          <header className="flex h-[33px] items-center border-b border-[#97a2ca] bg-linear-to-b from-[#a3acd0] to-[#c3c9e0] pr-1 pl-0.5">
            <svg viewBox="0 0 15 12" className="h-3 w-[15px]" aria-hidden="true">
              <path d="M0 1h6l1 2H0z" fill="#8d8578" />
              <path d="M0 2.500h14.500v9H0z" fill="#f6bd60" />
            </svg>
            <h2 className="flex-1 pl-1 text-white">Меню пользователя</h2>
            <button aria-label="Закрепить" className="flex h-[27px] w-[27px] items-center justify-center rounded-sm border border-[#7d89bb] bg-linear-to-b from-[#b9c1dd] to-[#a5afd2]">
              <svg viewBox="0 0 9 11" className="h-[11px] w-[9px]" fill="none" aria-hidden="true">
                <path d="M2.500 1.500h4v5M2.500 1.500v5M1 6.500h7M4.500 7v3.500M5.500 2v4" stroke="#fff" />
              </svg>
            </button>
          </header>
          <ul className="px-px pt-px">
            {nodes.map((n) => (
              <TreeRow key={n.label} node={n} />
            ))}
          </ul>
          <div className="mt-auto flex px-1 pb-[3px]">
            <input aria-label="Поиск в меню" className="h-4 min-w-0 flex-1 bg-white px-1 outline-none" />
            <button aria-label="Найти" className="flex h-4 w-[25px] items-center justify-center rounded-sm border border-[#7ab0dd] bg-linear-to-b from-[#e2f3fd] to-[#a9d5f3]">
              <svg viewBox="0 0 14 14" className="size-3.5" fill="none" aria-hidden="true">
                <circle cx="5.500" cy="5.500" r="3.800" stroke="#1d66bf" strokeWidth="2" />
                <path d="M8.500 8.500l4 4" stroke="#1d66bf" strokeWidth="2.400" />
              </svg>
            </button>
          </div>
        </section>

        <section className="ml-px flex min-w-0 flex-1 flex-col">
          <div className={`${bar} h-[42px] border-b border-[#97a2ca]`}>
            <Grip />
            <Group>
              <button className="flex items-center gap-1 pr-1.5 pl-0.5"><Printer />Печать...</button>
            </Group>
            <Group>
              <Tool name="Открыть"><OpenFolder /></Tool>
              <Tool name="Сохранить"><Floppy /></Tool>
              <button className="flex items-center pr-2 pl-0.5">
                <XlsExport />
                <span className="pl-1">Экспорт</span>
                <svg viewBox="0 0 7 4" className="ml-0.5 h-1 w-[6px]" aria-hidden="true"><path d="M0 0h7L3.500 4z" /></svg>
              </button>
            </Group>
            <Group>
              <Tool name="Предпросмотр"><Preview /></Tool>
            </Group>
            <Group>
              <Tool name="Увеличить"><ZoomIn /></Tool>
              <div className="flex h-[22px] w-20 items-center border border-[#b5bdd9] bg-white">
                <select aria-label="Масштаб" defaultValue="100%" className="h-full min-w-0 flex-1 appearance-none pl-0.5 font-['Roboto','Noto_Sans',sans-serif] text-[12px] outline-none">
                  <option>100%</option>
                </select>
                <span className="flex h-[17px] w-[15px] items-center justify-center rounded-sm border border-[#79aad8] bg-linear-to-b from-[#e2f3fd] to-[#9fd0f3]">
                  <svg viewBox="0 0 9 7" className="h-[7px] w-[9px]" fill="none" aria-hidden="true">
                    <path d="M1.500 1.500l3 3 3-3" stroke="#1c5fae" strokeWidth="2" />
                  </svg>
                </span>
              </div>
              <Tool name="Уменьшить"><ZoomOut /></Tool>
            </Group>
            <Group>
              <Tool name="Структура"><Outline /></Tool>
              <Tool name="Боковая панель"><SidePane /></Tool>
              <Tool name="Параметры страницы"><PageSetup /></Tool>
              <Tool name="Конструктор"><Drafting /></Tool>
            </Group>
            <Group>
              <Tool name="Первая страница"><NavIcon back end /></Tool>
              <Tool name="Предыдущая страница"><NavIcon back /></Tool>
              <input aria-label="Номер страницы" defaultValue="1" className="mx-px h-[22px] w-9 border border-[#b5bdd9] bg-white pl-0.5 font-['Roboto','Noto_Sans',sans-serif] text-[12px] outline-none" />
              <Tool name="Следующая страница"><NavIcon /></Tool>
              <Tool name="Последняя страница"><NavIcon end /></Tool>
            </Group>
            <div className="flex flex-1 items-center pl-0.5">
              <Tool name="Закрыть просмотр"><Clock /></Tool>
            </div>
            <More />
          </div>

          <div className="flex flex-1 border-t border-l-2 border-[#6f7078] bg-white">
            <div className="min-w-0 flex-1 overflow-hidden font-['Liberation_Sans',Arial,sans-serif]">
              <ReportTable />
              <div className="flex w-[964px] pt-3">
                <h2 className="w-[484px] pl-px text-[16px] leading-6 font-bold">Приход, расход</h2>
                <h2 className="pl-px text-[16px] leading-6 font-bold">Прибыль</h2>
              </div>
              <div className="flex w-[964px] pt-1.5">
                <LineChart />
                <BarChart />
              </div>
            </div>
            <div className="flex w-[18px] shrink-0 flex-col bg-[#f0f0f0] pr-0.5">
              <button aria-label="Вверх"><ScrollArrow d="M4.500 10L8 6.500l3.500 3.500" /></button>
              <span className="grow-[122]" />
              <span className="ml-px grow-[314] bg-[#cdcdcd]" />
              <span className="grow-[50]" />
              <button aria-label="Вниз"><ScrollArrow d="M4.500 6.500L8 10l3.500-3.500" /></button>
            </div>
          </div>
          <div className="flex h-[17px] border-l-2 border-[#6f7078] bg-[#f0f0f0] pb-px">
            <button aria-label="Влево"><ScrollArrow d="M9.500 4.500L6 8l3.500 3.500" /></button>
            <span className="grow-[37]" />
            <span className="grow-[709] bg-[#cdcdcd]" />
            <span className="grow-[182]" />
            <button aria-label="Вправо" className="mr-[18px]"><ScrollArrow d="M6.500 4.500L10 8l-3.500 3.500" /></button>
          </div>
          <div className="mt-0.5 flex gap-0.5 border-t border-[#d5d8e6] pt-0.5 pl-px">
            <span className="h-4 w-[182px] border border-[#b9c0da] bg-linear-to-b from-white to-[#ebecf4] text-center">Страница: 1 из 1</span>
            <span className="h-4 flex-1 border border-[#b9c0da] bg-linear-to-b from-white to-[#ebecf4]" />
          </div>
        </section>

        <aside className="w-[29px] shrink-0 pt-[5px] pl-1">
          <button className="flex h-[90px] w-6 flex-col items-center gap-1.5 rounded-l border border-[#97a2ca] bg-linear-to-r from-white to-[#dfe1ee]">
            <HelpBook />
            <span className="[writing-mode:vertical-rl]">Инструкция</span>
          </button>
        </aside>
      </main>

      <div className="flex items-start gap-0.5 border-t border-[#c8cce0] pl-1.5">
        {tabs.map((t, i) => (
          <WindowTab key={i} tab={t} />
        ))}
      </div>

      <footer className="mt-0.5 flex gap-0.5 border-t border-[#d5d8e6] pt-px pl-px">
        {status.map((s) => (
          <div key={s.text} className={`flex h-[17px] shrink-0 items-center border border-[#b9c0da] bg-linear-to-b from-white to-[#ebecf4] pl-0.5 ${s.box}`}>
            {s.icon}
            <span className="flex-1 text-center">{s.text}</span>
          </div>
        ))}
        <div className="h-[17px] flex-1 border border-[#b9c0da] bg-linear-to-b from-white to-[#ebecf4]">
          <svg viewBox="0 0 12 12" className="mt-[3px] ml-auto size-3" fill="none" aria-hidden="true">
            <path d="M1 11L11 1M5 11l6-6M9 11l2-2" stroke="#9aa3c4" />
          </svg>
        </div>
      </footer>
    </div>
  );
}
